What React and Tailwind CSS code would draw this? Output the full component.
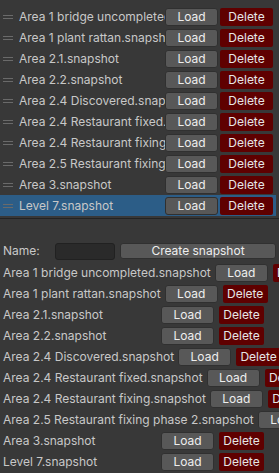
import React from "react";

const SNAPSHOTS = [
  "Area 1 bridge uncompleted.snapshot",
  "Area 1 plant rattan.snapshot",
  "Area 2.1.snapshot",
  "Area 2.2.snapshot",
  "Area 2.4 Discovered.snapshot",
  "Area 2.4 Restaurant fixed.snapshot",
  "Area 2.4 Restaurant fixing.snapshot",
  "Area 2.5 Restaurant fixing phase 2.snapshot",
  "Area 3.snapshot",
  "Level 7.snapshot",
];

const font = { fontFamily: "Inter, 'Noto Sans', sans-serif" };

const LoadButton = ({ w = "w-[53px]" }) => (
  <button className={`${w} h-[18px] flex-none rounded-[3px] border border-[#303030] bg-[#585858] text-[12px] leading-none text-[#eeeeee]`}>
    Load
  </button>
);

const DeleteButton = ({ w = "w-[53px]" }) => (
  <button className={`${w} h-[18px] flex-none rounded-[2px] bg-[#5f0000] text-[12px] leading-none text-[#e6e6e6]`}>
    Delete
  </button>
);

const Handle = () => (
  <div className="flex w-[10px] flex-none flex-col gap-[2px]">
    <div className="h-px bg-[#6a6a6a]" />
    <div className="h-px bg-[#6a6a6a]" />
  </div>
);

export default function App() {
  return (
    <div className="h-[473px] w-[279px] overflow-hidden bg-[#383838] text-[12px] text-[#c8c8c8]" style={font}>
      {/* reorderable list */}
      <div className="w-[276px] pt-[6px]">
        {SNAPSHOTS.map((name, i) => (
          <div
            key={name}
            className={`flex h-[21px] items-center pl-[3px] pr-[3px] ${i === SNAPSHOTS.length - 1 ? "bg-[#2c5d87]" : ""}`}>
            <Handle />
            <div className="ml-[6px] flex-1 overflow-hidden whitespace-nowrap">{name}</div>
            <div className="flex gap-[2px]">
              <LoadButton />
              <DeleteButton />
            </div>
          </div>
        ))}
      </div>
      <div className="mt-[2px] h-px bg-[#232323]" />

      {/* create snapshot */}
      <div className="mt-[22px] flex h-[20px] items-center pl-[3px] whitespace-nowrap">
        <div className="w-[52px] flex-none">Name:</div>
        <div className="h-[17px] w-[60px] flex-none rounded-[3px] border border-[#212121] bg-[#2a2a2a]" />
        <button className="ml-[5px] h-[16px] w-[156px] flex-none rounded-[3px] border border-[#303030] bg-[#585858] text-[12px] leading-none text-[#eeeeee]">
          Create snapshot
        </button>
      </div>

      {/* flat list */}
      <div className="mt-px">
        {SNAPSHOTS.map((name) => (
          <div key={name} className="flex h-[21px] items-center pl-[3px] whitespace-nowrap">
            <div className="min-w-[158px] flex-none pr-[4px]">{name}</div>
            <LoadButton />
            <div className="ml-[5px]">
              <DeleteButton w="w-[45px]" />
            </div>
          </div>
        ))}
      </div>
    </div>
  );
}
